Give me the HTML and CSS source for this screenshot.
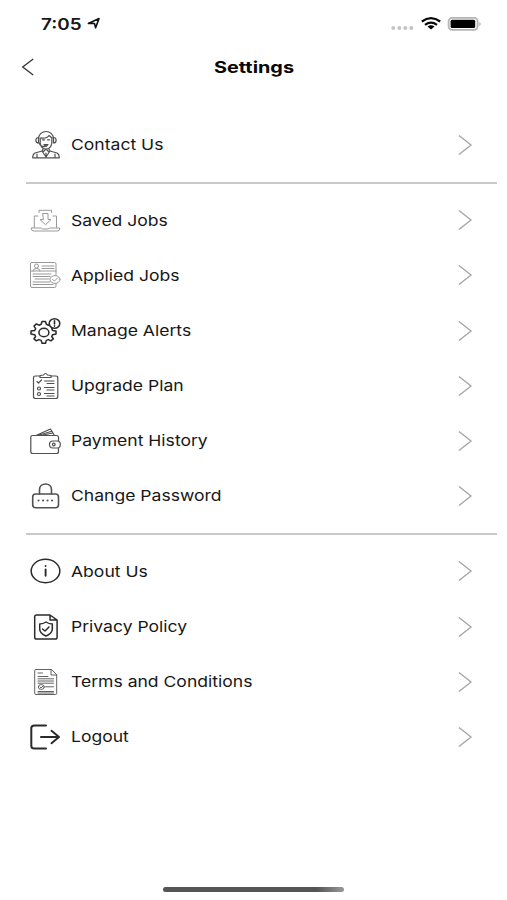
FILE: index.html
```html
<!DOCTYPE html>
<html lang="en">
<head>
<meta charset="utf-8">
<title>Settings</title>
<link rel="stylesheet" href="styles.css">
</head>
<body>
<div class="status">
  <span class="time">7:05</span>
  <svg class="locate" width="14" height="14" viewBox="0 0 14 14"><path d="M1.4 6.4 12 1.600 8.600 10.800 7.500 6.500z"/></svg>
  <svg class="indicators" width="92" height="16" viewBox="0 0 92 16">
    <g fill="#c4c4c4"><circle cx="3.3" cy="11.900" r="2"/><circle cx="9.3" cy="11.900" r="2"/><circle cx="15.3" cy="11.900" r="2"/><circle cx="21.3" cy="11.900" r="2"/></g>
    <g fill="none" stroke="#080808" stroke-width="2.2"><path d="M31.8 5.500Q41 -1.200 50.2 5.500M35 8.800Q41 4.300 47 8.800"/></g>
    <path d="M37.5 10.600Q41 8 44.5 10.600L41 13.600z"/>
    <rect x="58.6" y="1.900" width="29" height="12" rx="3.600" fill="#fff" stroke="#b4b4b4" stroke-width="1.800"/>
    <rect x="60.6" y="3.700" width="24.600" height="8.400" rx="1.500"/><path d="M89.500 6q2 2 0 4z" fill="#888"/>
  </svg>
</div>
<header class="header">
  <svg class="back" width="14" height="20" viewBox="0 0 14 20"><path d="M12.2 2 1.7 10 12.2 18"/></svg>
  <h1 class="title">Settings</h1>
</header>
<main class="menu">
  <section class="group">
    <div class="row">
      <svg class="icon mid" viewBox="0 0 32 32"><path d="M9.5 10C9.5 0 24.500 0 24.500 10M11.200 9Q18 10 20 6.500L23 9M11.200 9v5c1 8 10.600 8 11.600 0V9M9.500 8.500C6 8.500 6 14 9.500 14zM24.500 8.500C28 8.500 28 14 24.500 14zM10 14q2 4 6 3.500M14 20l-1 2-7 2q-2.300 1-2.300 4.800h26.600Q30.300 25 28 24l-7-2-1-2M13 22l4 6 4-6M14 23l3-3 3 3M17 24v4M8 25v4M26 25v4"/><path d="M13.500 10.800h2M18.500 10.800h2M15 15.500h4l-2 2z"/></svg>
      <span class="label">Contact Us</span><svg class="chev" viewBox="0 0 16 22"><path d="M2 1.500 14 11 2 20.500"/></svg>
    </div>
  </section>
  <section class="group">
    <div class="row">
      <svg class="icon light" viewBox="0 0 32 32"><path d="M9 12H5.300V23.500M24 12h3.500V23.500M2.300 24h10l1 1h6l1-1h10.400v1q0 2-2.500 2H4.800q-2.500 0-2.500-2zM10 8.500V6.300H22.500V8.500M14 9.500h5v6h3l-5.500 5.300L11 15.500h3z"/></svg>
      <span class="label">Saved Jobs</span><svg class="chev" viewBox="0 0 16 22"><path d="M2 1.500 14 11 2 20.500"/></svg>
    </div>
    <div class="row">
      <svg class="icon light" viewBox="0 0 32 32"><path d="M27 16V5q0-1.500-1.500-1.500H3Q1.500 3.500 1.500 5v22q0 1.500 1.500 1.500h22.500Q27 28.500 27 27v-3M2 12h25M4 12Q4 9.500 7.500 9.500T11 12M13 7h12M13 9.500h12M4 15h18M4 17.500h17M6 20h14M4 23h17M4 25.500h20"/><circle cx="7.500" cy="7" r="2"/><ellipse cx="26" cy="20.500" rx="5" ry="3.900" fill="#fff"/><path d="m23.500 20.500 2 1.500 3-3"/></svg>
      <span class="label">Applied Jobs</span><svg class="chev" viewBox="0 0 16 22"><path d="M2 1.500 14 11 2 20.500"/></svg>
    </div>
    <div class="row">
      <svg class="icon dark" viewBox="0 0 32 32"><path d="M13 6.500h3.500l.8 2.800 2.200.9 2.400-1.300 2.400 2.200-1.600 2.500.9 1.800 3.400.6v3l-3.400.7-.9 1.800 1.600 2.300-2.400 2-2.400-1.200-2.200.8-.8 2.800H13l-.8-2.800-2.200-.8-2.600 1.200-2.400-2 1.600-2.300-.9-1.800L2 19v-3l3.700-.6.9-1.800L5 11.100l2.400-2.200L10 10.200l2.200-.9z"/><ellipse cx="14.900" cy="17.500" rx="5" ry="4.300"/><ellipse cx="25.500" cy="8.500" rx="5.300" ry="4.700" fill="#fff"/><path d="M25.500 5.700v3.200M25.500 10.800v.3" stroke-width="1.600"/></svg>
      <span class="label">Manage Alerts</span><svg class="chev" viewBox="0 0 16 22"><path d="M2 1.500 14 11 2 20.500"/></svg>
    </div>
    <div class="row">
      <svg class="icon mid" viewBox="0 0 32 32"><path d="M11 6H6.500Q4.500 6 4.500 8v18.500q0 2 2 2h20.300q2 0 2-2V8q0-2-2-2H22M11 7.500V5.500L14.500 5Q16.500 2 18.500 5l3.500.5v2z"/><path d="m8 11.500 1.500 1.500 3-3M15.500 11h9.500M18 13.500h7M15.500 17.500h9.500M18 20h7M15.500 23.500h9.500M18 26h7"/><circle cx="10" cy="18.500" r="1.500"/><circle cx="10" cy="24" r="1.500"/></svg>
      <span class="label">Upgrade Plan</span><svg class="chev" viewBox="0 0 16 22"><path d="M2 1.500 14 11 2 20.500"/></svg>
    </div>
    <div class="row">
      <svg class="icon mid" viewBox="0 0 32 32"><path d="M29.500 16v-3.500q0-2-2-2H3.800q-2 0-2 2v14q0 2 2 2h23.700q2 0 2-2V23M7 10.500 21.500 4l3.700 6M10.500 10 22 6.500M14.500 10l9-2M28.500 16H24q-3.500 0-3.500 3.500T24 23h4.500q2.800 0 2.800-3.500T28.500 16"/><circle cx="24.800" cy="19.500" r="1.300"/></svg>
      <span class="label">Payment History</span><svg class="chev" viewBox="0 0 16 22"><path d="M2 1.500 14 11 2 20.500"/></svg>
    </div>
    <div class="row">
      <svg class="icon mid bold" viewBox="0 0 32 32"><rect x="3.700" y="14" width="25.800" height="13.800" rx="3"/><path d="M10.500 14V9.700c0-7.700 12-7.700 12 0V14"/><path d="M9.500 20.500h.1M14 20.500h.1M18.500 20.500h.1M23 20.500h.1" stroke-width="2"/></svg>
      <span class="label">Change Password</span><svg class="chev" viewBox="0 0 16 22"><path d="M2 1.500 14 11 2 20.500"/></svg>
    </div>
  </section>
  <section class="group">
    <div class="row">
      <svg class="icon dark" viewBox="0 0 32 32"><ellipse cx="16.500" cy="16" rx="14.300" ry="11.700"/><path d="M16.600 14.400v6.400M16.600 10.900v.1" stroke-width="1.900"/></svg>
      <span class="label">About Us</span><svg class="chev" viewBox="0 0 16 22"><path d="M2 1.500 14 11 2 20.500"/></svg>
    </div>
    <div class="row">
      <svg class="icon dark" viewBox="0 0 32 32"><path d="M21 4H7.500Q5.700 4 5.700 5.800v20.400Q5.700 28 7.500 28H26.300q1.800 0 1.800-1.800V9zM21 4v5h7zM17 11q3 2 6.300 2v5q0 4.500-6.300 7-6.300-2.500-6.300-7v-5q3.300 0 6.300-2zM13.500 18l2.500 2 4-4"/></svg>
      <span class="label">Privacy Policy</span><svg class="chev" viewBox="0 0 16 22"><path d="M2 1.500 14 11 2 20.500"/></svg>
    </div>
    <div class="row">
      <svg class="icon mid thin" viewBox="0 0 32 32"><path d="M22 3.500H7q-1.300 0-1.300 1.300v22.400q0 1.300 1.300 1.300h19.400q1.300 0 1.300-1.300V9zM22 3.500V9h5.700M9 7h4.500M9 10.500h10M9 12.800h15.500M9 15h15.500M9 17.200h15.500M16.500 20.800h8M9 25.500h15.500M9 27h15.500"/><ellipse cx="12.300" cy="21" rx="3" ry="2.400"/><path d="m11 21 1 1 2-2"/></svg>
      <span class="label">Terms and Conditions</span><svg class="chev" viewBox="0 0 16 22"><path d="M2 1.500 14 11 2 20.500"/></svg>
    </div>
    <div class="row">
      <svg class="icon dark logout" viewBox="0 0 32 32"><path d="M17 4.500H5.500Q2.300 4.500 2.300 7V25Q2.300 27.500 5.500 27.500H17M12 16H30M22.500 9.800l7.500 6.200-7.500 6.200"/></svg>
      <span class="label">Logout</span><svg class="chev" viewBox="0 0 16 22"><path d="M2 1.500 14 11 2 20.500"/></svg>
    </div>
  </section>
</main>
<footer class="footer"><div class="home"></div></footer>
</body>
</html>
```
FILE: styles.css
```css
* { box-sizing: border-box; }
body {
  margin: 0;
  height: 900px;
  display: flex;
  flex-direction: column;
  background: #fff;
  color: #171717;
  font-family: Inter, "Liberation Sans", sans-serif;
  overflow: hidden;
}
.status {
  display: flex;
  align-items: center;
  height: 47px;
  padding: 0 25px 0 41px;
}
.time {
  width: 46px;
  font-size: 16px;
  font-weight: 600;
  line-height: 20px;
  transform: scaleX(1.18);
  transform-origin: left;
}
.locate { fill: none; stroke: #111; stroke-width: 1.6; stroke-linejoin: round; }
.indicators { margin-left: auto; }
.header {
  display: grid;
  grid-template-columns: 40px 1fr 40px;
  align-items: center;
  height: 40px;
  padding-left: 21px;
  padding-right: 20px;
}
.back { fill: none; stroke: #333; stroke-width: 1.3; }
.title {
  margin: 0;
  text-align: center;
  font-size: 16px;
  font-weight: 650;
  color: #080808;
  transform: scaleX(1.24);
}
.menu { padding: 21.8px 10px 0 26px; }
.group { padding: 8.7px 24px 9.3px 3px; }
.group + .group { border-top: 2px solid #c9c9c9; }
.row {
  display: flex;
  align-items: center;
  height: 55.2px;
}
.icon {
  flex: none;
  width: 32px;
  height: 32px;
  margin-right: 10px;
  fill: none;
  stroke-width: 1.2;
  stroke-linejoin: round;
  stroke-linecap: round;
}
.light { stroke: #999; stroke-width: 1; }
.mid { stroke: #505050; }
.dark { stroke: #2a2a2a; stroke-width: 1.5; }
.bold { stroke-width: 1.6; }
.thin { stroke-width: 0.9; }
.logout { stroke-width: 2; }
.label {
  font-size: 15px;
  line-height: 20px;
  padding-top: 0.6px;
  white-space: nowrap;
  transform: scaleX(1.17);
  transform-origin: left;
}
.chev {
  width: 16px;
  height: 22px;
  margin-left: auto;
  fill: none;
  stroke: #a3a3a3;
  stroke-width: 1.3;
}
.footer { margin-top: auto; padding-bottom: 8px; }
.home {
  width: 181px;
  height: 5px;
  margin-left: 163px;
  border-radius: 3px;
  background: linear-gradient(90deg, #555 85%, #999);
}
```
